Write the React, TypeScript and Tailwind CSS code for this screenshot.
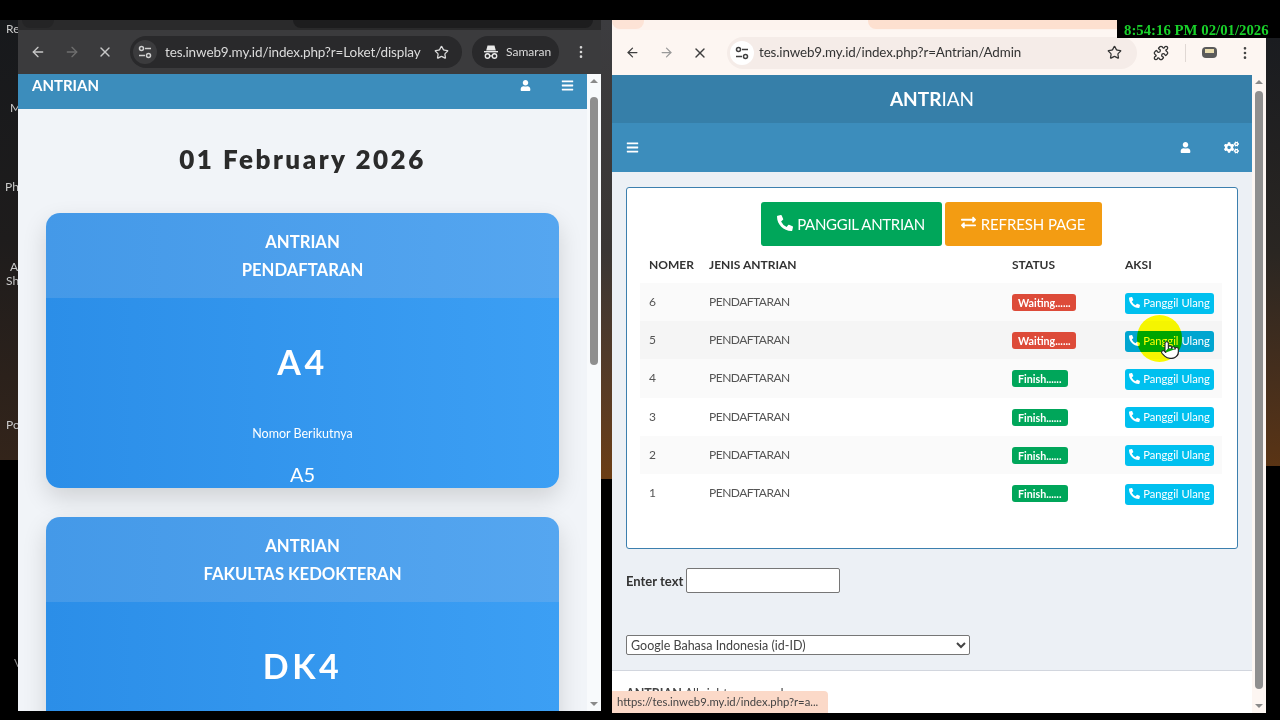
import React from "react";
import { ArrowLeft, ArrowRight, X, Star, Puzzle, EllipsisVertical, Pointer } from "lucide-react";
import { FaUser, FaBars, FaCogs, FaExchangeAlt, FaPhoneAlt } from "react-icons/fa";

const rows = [
  { no: 6, status: "Waiting......", wait: true },
  { no: 5, status: "Waiting......", wait: true },
  { no: 4, status: "Finish......", wait: false },
  { no: 3, status: "Finish......", wait: false },
  { no: 2, status: "Finish......", wait: false },
  { no: 1, status: "Finish......", wait: false },
];

// chrome "view site information" icon
const TuneIcon = ({ color }: { color: string }) => (
  <svg width="14" height="14" viewBox="0 0 14 14" fill="none" stroke={color} strokeWidth="1.5">
    <circle cx="3.5" cy="3.5" r="2" />
    <path d="M7 3.5h6M1 10.5h6" />
    <circle cx="10.5" cy="10.5" r="2" />
  </svg>
);

const IncognitoIcon = () => (
  <svg width="16" height="16" viewBox="0 0 16 16" fill="#e8e8e8">
    <path d="M4.5 1.5h7l1.3 5H3.2z" />
    <rect x="1" y="7" width="14" height="1.4" />
    <circle cx="4.5" cy="12" r="2.2" fill="none" stroke="#e8e8e8" strokeWidth="1.4" />
    <circle cx="11.5" cy="12" r="2.2" fill="none" stroke="#e8e8e8" strokeWidth="1.4" />
    <rect x="6.5" y="11.3" width="3" height="1.2" />
  </svg>
);

const Scrollbar = ({ thumb, bg }: { thumb: string; bg: string }) => (
  <div className={`w-[14px] h-full flex flex-col items-center shrink-0 ${bg}`}>
    <div className="h-[14px] flex items-center justify-center text-[#8a8a8a]">
      <div className="w-0 h-0 border-l-[4px] border-r-[4px] border-b-[4px] border-l-transparent border-r-transparent border-b-[#8a8a8a]" />
    </div>
    <div className={`w-[8px] rounded-full bg-[#8f8f8f] ${thumb}`} />
    <div className="flex-1" />
    <div className="h-[14px] flex items-center justify-center">
      <div className="w-0 h-0 border-l-[4px] border-r-[4px] border-t-[4px] border-l-transparent border-r-transparent border-t-[#8a8a8a]" />
    </div>
  </div>
);

const Card = ({ title, sub, num }: { title: string; sub: string; num: string }) => (
  <div className="w-[513px] shrink-0 rounded-[14px] overflow-hidden shadow-[0_10px_24px_rgba(0,0,0,0.14)] text-white">
    <div className="h-[85px] bg-gradient-to-r from-[#4499e8] to-[#55a6f0] flex flex-col items-center justify-center text-[16.7px] leading-[28px] font-bold">
      <div>{title}</div>
      <div>{sub}</div>
    </div>
    <div className="h-[190px] bg-gradient-to-r from-[#2b8ee8] to-[#3c9ff4] flex flex-col items-center">
      <div className="mt-[40px] h-[48px] leading-[48px] text-[34px] font-bold tracking-[3.5px]">{num}</div>
      <div className="mt-[38px] text-[12.5px] leading-[20px]">Nomor Berikutnya</div>
      <div className="mt-[18px] text-[20px] leading-[24px]">A5</div>
    </div>
  </div>
);

const Desktop = () => (
  <>
    <div className="absolute left-0 top-[20px] w-[1280px] h-[440px] bg-gradient-to-b from-[#17191c] via-[#1e1c1c] to-[#33241a]" />
    <div className="absolute left-[601px] top-[20px] w-[11px] h-[459px] bg-gradient-to-b from-[#3c3c3f] via-[#3a3634] to-[#6b3d14]" />
    <div className="absolute left-[1266px] top-[38px] w-[14px] h-[428px] bg-gradient-to-b from-[#1a1c20] via-[#2a2622] to-[#5a3414]" />
    <span className="absolute left-[6px] top-[20px] text-[12px] text-[#c9c9c9]">Re</span>
    <span className="absolute left-[10px] top-[99px] text-[12px] text-[#c9c9c9]">M</span>
    <span className="absolute left-[5px] top-[178px] text-[12px] text-[#c9c9c9]">Ph</span>
    <span className="absolute left-[10px] top-[258px] text-[12px] text-[#c9c9c9]">A</span>
    <span className="absolute left-[6px] top-[272px] text-[12px] text-[#c9c9c9]">Sh</span>
    <span className="absolute left-[6px] top-[416px] text-[12px] text-[#c9c9c9]">Po</span>
    <span className="absolute left-[14px] top-[654px] text-[12px] text-[#8a8a8a]">V</span>
  </>
);

const LeftWindow = () => (
  <div className="absolute left-[18px] top-[20px] w-[583px] h-[691px] flex flex-col bg-[#f1f4f8] overflow-hidden">
    <div className="h-[10px] bg-[#2a2a2b] flex shrink-0">
      <div className="ml-[4px] w-[32px] h-[8px] rounded-b-lg bg-[#242425]" />
      <div className="ml-[239px] w-[300px] h-[8px] rounded-b-lg bg-[#1d1d1e]" />
    </div>
    <div className="h-[44px] bg-[#3b3b3d] flex items-center shrink-0 pl-[12px] text-[#c7c7c7]">
      <ArrowLeft size={16} strokeWidth={2} />
      <ArrowRight size={16} strokeWidth={2} className="ml-[18px] text-[#6f6f6f]" />
      <X size={16} strokeWidth={2} className="ml-[17px]" />
      <div className="ml-[17px] w-[332px] h-[32px] rounded-full bg-[#29292b] flex items-center pl-[3px]">
        <div className="w-[24px] h-[24px] rounded-full bg-[#3b3b3d] flex items-center justify-center">
          <TuneIcon color="#d0d0d0" />
        </div>
        <span className="ml-[8px] text-[13.5px] text-[#dcdcdc] tracking-[-0.12px] whitespace-nowrap">tes.inweb9.my.id/index.php?r=Loket/display</span>
        <Star size={15} className="ml-[13px] text-[#dcdcdc] shrink-0" />
      </div>
      <div className="ml-[10px] w-[87px] h-[32px] rounded-full bg-[#29292b] flex items-center pl-[11px]">
        <IncognitoIcon />
        <span className="ml-[7px] text-[12px] text-[#dcdcdc]">Samaran</span>
      </div>
      <EllipsisVertical size={16} className="ml-[14px] text-[#d8d8d8]" />
    </div>
    <div className="flex-1 flex min-h-0">
      <div className="flex-1 min-w-0 flex flex-col">
        <div className="h-[35px] bg-[#3c8dbc] shrink-0 flex items-start pl-[14px] pr-[13px] text-white">
          <span className="mt-[2px] text-[15px] leading-[18px] font-bold">ANTRIAN</span>
          <FaUser size={11} className="ml-auto mt-[6px]" />
          <FaBars size={13} className="ml-[30px] mt-[5px]" />
        </div>
        <div className="h-[104px] shrink-0 flex items-center justify-center pb-[3px] text-[26px] font-[800] tracking-[2.5px] text-[#2b2b2b]">
          01 February 2026
        </div>
        <div className="flex flex-col items-center gap-[29px]">
          <Card title="ANTRIAN" sub="PENDAFTARAN" num="A4" />
          <Card title="ANTRIAN" sub="FAKULTAS KEDOKTERAN" num="DK4" />
        </div>
      </div>
      <Scrollbar thumb="h-[268px] mt-[9px]" bg="bg-[#f8fafc]" />
    </div>
  </div>
);

const RightWindow = () => (
  <div className="absolute left-[612px] top-[20px] w-[654px] h-[693px] flex flex-col bg-[#ecf0f5] overflow-hidden">
    <div className="h-[10px] bg-[#fdf3ee] flex shrink-0">
      <div className="w-[32px] h-[9px] rounded-b-lg bg-[#fde3d6]" />
      <div className="ml-[224px] w-[260px] h-[9px] rounded-b-lg bg-[#fde0d0]" />
    </div>
    <div className="h-[45px] bg-[#fdf6f2] flex items-center shrink-0 pl-[13px] text-[#3f3f3f]">
      <ArrowLeft size={15} strokeWidth={2} />
      <ArrowRight size={15} strokeWidth={2} className="ml-[19px] text-[#9a9a9a]" />
      <X size={16} strokeWidth={2} className="ml-[18px]" />
      <div className="ml-[19px] w-[410px] h-[32px] rounded-full bg-[#f5ece8] flex items-center pl-[3px]">
        <div className="w-[24px] h-[24px] rounded-full bg-white flex items-center justify-center">
          <TuneIcon color="#3f3f3f" />
        </div>
        <span className="ml-[5px] text-[13.4px] text-[#333] tracking-[-0.12px] whitespace-nowrap">tes.inweb9.my.id/index.php?r=Antrian/Admin</span>
        <Star size={15} className="ml-auto mr-[15px] text-[#333] shrink-0" />
      </div>
      <Puzzle size={16} className="ml-[16px] text-[#333]" />
      <div className="ml-[16px] w-px h-[18px] bg-[#e0d8d4]" />
      <div className="ml-[16px] w-[15px] h-[11px] rounded-sm bg-[#5a5a5a] flex justify-center pt-[2px]">
        <div className="w-[9px] h-[4px] bg-[#e9dcae]" />
      </div>
      <EllipsisVertical size={16} className="ml-[20px] text-[#444]" />
    </div>
    <div className="flex-1 flex min-h-0">
      <div className="flex-1 min-w-0 flex flex-col">
        <div className="h-[48px] shrink-0 bg-[#367fa9] flex items-center justify-center text-[19px] text-white">
          <span className="font-bold">ANTR</span>
          <span>IAN</span>
        </div>
        <div className="h-[49px] shrink-0 bg-[#3c8dbc] flex items-center px-[14px] text-white">
          <FaBars size={13} />
          <FaUser size={11} className="ml-auto" />
          <FaCogs size={15} className="ml-[33px] mr-[-1px]" />
        </div>
        <div className="flex-1 min-h-0 pl-[14px] pr-[14px] pt-[15px] flex flex-col">
          <div className="h-[362px] shrink-0 bg-white border border-[#3c7fae] rounded-[3px] pt-[14px] px-[13px]">
            <div className="flex justify-center gap-[3px] pr-[2px] text-white">
              <div className="w-[181px] h-[44px] rounded-[3px] bg-[#00a65a] flex items-center justify-center gap-[4px] text-[15px] tracking-[-0.3px]">
                <FaPhoneAlt size={16} className="mb-[3px]" />
                <span>PANGGIL ANTRIAN</span>
              </div>
              <div className="w-[157px] h-[44px] rounded-[3px] bg-[#f39c12] flex items-center justify-center gap-[5px] text-[15px] tracking-[-0.1px]">
                <FaExchangeAlt size={15} className="mb-[3px]" />
                <span>REFRESH PAGE</span>
              </div>
            </div>
            <div className="mt-[4px] mr-[2px] text-[12px] tracking-[-0.5px] text-[#555]">
              <div className="h-[33px] pb-[3px] flex items-center font-bold tracking-normal text-[#333]">
                <div className="w-[60px] pl-[9px] shrink-0">NOMER</div>
                <div className="w-[312px] shrink-0 pl-[9px]">JENIS ANTRIAN</div>
                <div className="w-[113px] shrink-0">STATUS</div>
                <div>AKSI</div>
              </div>
              {rows.map((r, i) => (
                <div
                  key={r.no}
                  className={`h-[38.2px] flex items-center ${i === 1 ? "bg-[#f5f5f5]" : i % 2 === 0 ? "bg-[#fafafa]" : "bg-white"}`}
                >
                  <div className="w-[60px] pl-[9px] shrink-0">{r.no}</div>
                  <div className="w-[312px] shrink-0 pl-[9px]">PENDAFTARAN</div>
                  <div className="w-[113px] shrink-0 mt-[2px]">
                    <span className={`inline-block h-[17px] leading-[17px] rounded-[3px] px-[6px] text-[10.7px] tracking-normal font-bold text-white whitespace-nowrap ${r.wait ? "w-[64px] bg-[#dd4b39]" : "w-[56px] bg-[#00a65a]"}`}>
                      {r.status}
                    </span>
                  </div>
                  <div className={`w-[89px] h-[21px] mt-[2px] rounded-[3px] flex items-center justify-center gap-[3px] text-[11.2px] tracking-normal text-white ${i === 1 ? "bg-[#00a5d0]" : "bg-[#00c0ef]"}`}>
                    <FaPhoneAlt size={11} className="mb-[2px]" />
                    <span>Panggil Ulang</span>
                  </div>
                </div>
              ))}
            </div>
          </div>
          <div className="mt-[18px] h-[26px] flex items-center text-[13px] font-bold text-[#333]">
            <span className="mt-[3px]">Enter text</span>
            <div className="ml-[3px] w-[154px] h-[25px] bg-white border border-[#767676] rounded-[2px]" />
          </div>
          <select className="mt-[42px] w-[344px] h-[20px] bg-white border border-[#767676] rounded-[2px] text-[12.5px] text-[#444]" defaultValue="id">
            <option value="id">Google Bahasa Indonesia (id-ID)</option>
          </select>
          <div className="flex-1" />
        </div>
        <div className="h-[43px] shrink-0 bg-white border-t border-[#d2d6de] pl-[14px] pt-[14px] text-[12.5px] text-[#444]">
          <b>ANTRIAN</b> All rights reserved
        </div>
      </div>
      <Scrollbar thumb="h-[598px] mt-[2px]" bg="bg-[#fdf6f2]" />
    </div>
    <div className="absolute left-0 bottom-0 w-[216px] h-[22px] bg-[#fbd9c8] rounded-tr-[4px] pl-[5px] text-[11.3px] leading-[22px] text-[#444] whitespace-nowrap">
      https://tes.inweb9.my.id/index.php?r=a...
    </div>
  </div>
);

export default function App() {
  return (
    <div className="relative w-[1280px] h-[720px] bg-black overflow-hidden [font-family:Lato,'Liberation_Sans',sans-serif]">
      <Desktop />
      <LeftWindow />
      <RightWindow />
      <div className="absolute left-[1117px] top-[20px] w-[163px] h-[18px] bg-black pl-[7px] text-[14.8px] leading-[20px] font-bold text-[#19d12a] whitespace-nowrap [font-family:'Liberation_Serif',serif]">
        8:54:16 PM 02/01/2026
      </div>
      {/* highlight following the mouse, multiplies over the button */}
      <div className="absolute left-[1137px] top-[315px] w-[45px] h-[47px] rounded-full bg-[#ffff00] mix-blend-multiply" />
      <Pointer size={20} className="absolute left-[1160px] top-[340px] text-[#222] fill-white" strokeWidth={1.3} />
    </div>
  );
}
